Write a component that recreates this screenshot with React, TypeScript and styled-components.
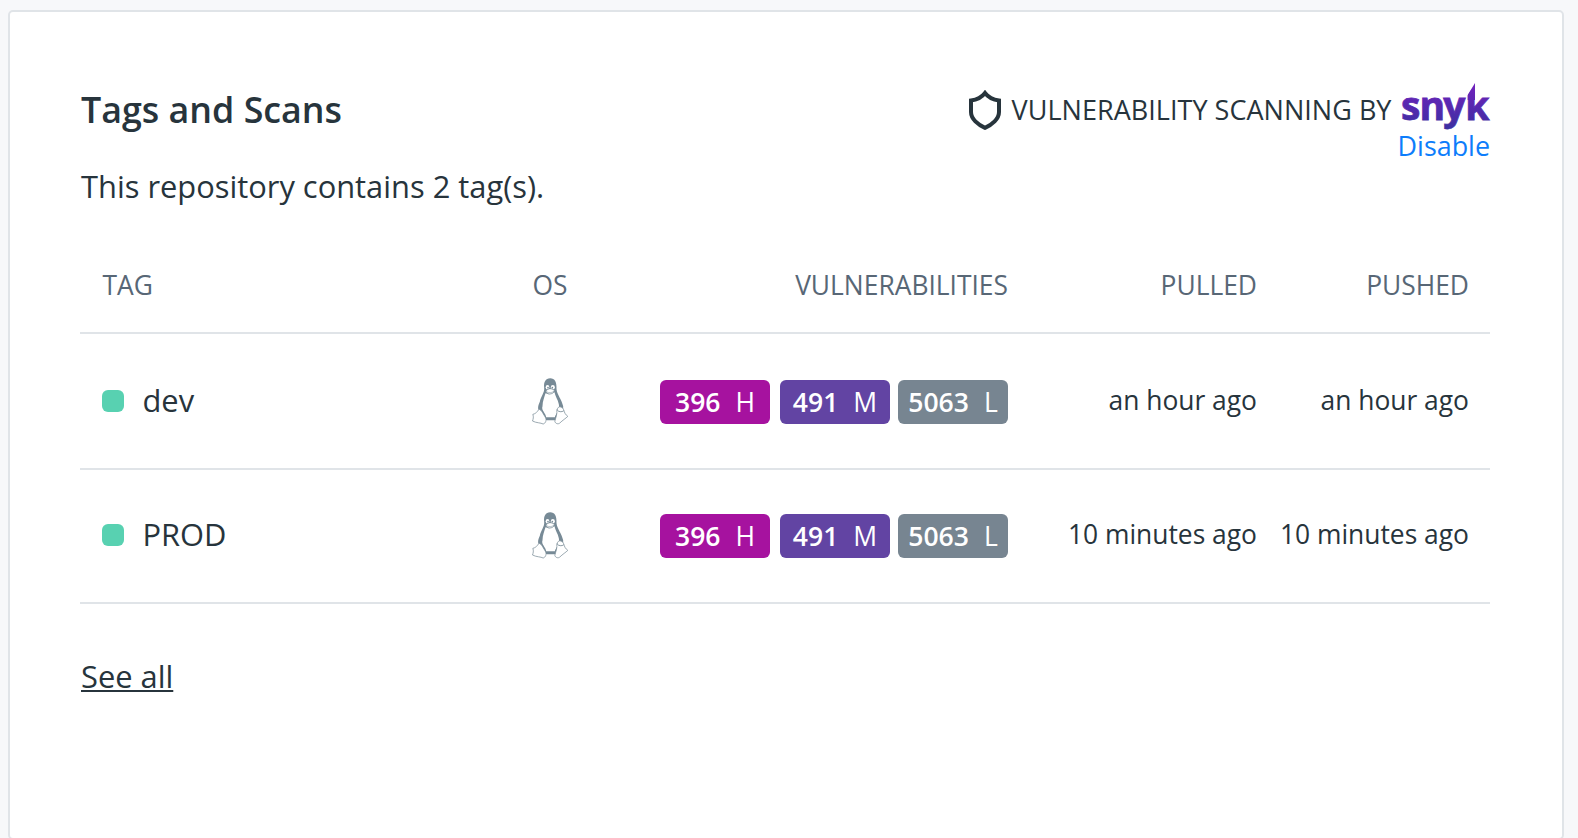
import React from "react";
import styled, { createGlobalStyle } from "styled-components";

const GlobalStyle = createGlobalStyle`
  *, *::before, *::after { box-sizing: border-box; }
  html, body { margin: 0; padding: 0; }
  body {
    height: 838px;
    overflow: hidden;
    background: #f7f8fa;
    color: #27343c;
    font-family: "Open Sans", sans-serif;
  }
`;

const Page = styled.main`
  padding: 10px 14px 0 8px;
`;

const Card = styled.section`
  height: 830px;
  padding: 73px 72px 0 70px;
  background: #fff;
  border: 2px solid #e0e4e8;
  border-radius: 5px;
`;

const CardHeader = styled.header`
  display: flex;
  justify-content: space-between;
  align-items: flex-start;
  height: 80px;
  padding-left: 1px;
`;

const Title = styled.h2`
  margin: 0;
  font-size: 35.8px;
  line-height: 48px;
  font-weight: 600;
`;

const Scanning = styled.div`
  display: flex;
  flex-direction: column;
  align-items: flex-end;
  padding-top: 5px;
`;

const ScanningLine = styled.div`
  display: flex;
  align-items: flex-start;
  height: 37px;
  font-size: 27px;
  line-height: 39px;
  letter-spacing: 0.03px;
  white-space: nowrap;
`;

const ShieldIcon = styled.svg`
  width: 32px;
  height: 40px;
  margin-right: 11px;
`;

const SnykLogo = styled.svg`
  width: 90px;
  height: 60px;
  margin: -12px 0 0 8.5px;
  overflow: visible;
`;

const DisableLink = styled.a`
  color: #0d7dfb;
  font-size: 26.9px;
  line-height: 37px;
`;

const Summary = styled.p`
  margin: 0;
  padding-left: 1px;
  font-size: 30.85px;
  line-height: 42px;
`;

const Table = styled.div`
  margin-top: 59px;
`;

const columns = `
  display: grid;
  grid-template-columns: 430px 36px 440px 249px 212px;
  padding-left: 22px;
  border-bottom: 2px solid #e0e4e8;
`;

const HeadRow = styled.div`
  ${columns}
  height: 68px;
  color: #586776;
  font-size: 26.4px;
  line-height: 38px;
`;

const Row = styled.div<{ $first?: boolean }>`
  ${columns}
  align-items: center;
  height: ${(p) => (p.$first ? 136 : 134)}px;
  padding-bottom: ${(p) => (p.$first ? 0 : 2)}px;
`;

const HeadCell = styled.div<{ $right?: boolean }>`
  padding-left: 0.5px;
  text-align: ${(p) => (p.$right ? "right" : "left")};
`;

const TagCell = styled.div`
  display: flex;
  align-items: center;
`;

const Status = styled.span`
  width: 22px;
  height: 22px;
  margin-right: 18.5px;
  border-radius: 6px;
  background: #58d1b1;
`;

const TagName = styled.span`
  padding-bottom: 2px;
  font-size: 30.85px;
  line-height: 42px;
`;

const OsCell = styled.div`
  display: flex;
  justify-content: center;
`;

const TuxIcon = styled.svg`
  flex: none;
  width: 44px;
  height: 54px;
`;

const Badges = styled.div`
  display: flex;
  justify-content: flex-end;
  padding-top: 2px;
`;

const Badge = styled.span<{ $color: string }>`
  display: flex;
  justify-content: center;
  gap: 15px;
  width: 110px;
  height: 44px;
  border-radius: 6px;
  background: ${(p) => p.$color};
  color: #fff;
  font-size: 26.5px;
  line-height: 45px;

  & + & { margin-left: 10px; }
  & + & + & { margin-left: 8px; }
`;

const Count = styled.span`
  font-weight: 600;
`;

const Time = styled.div`
  padding-bottom: 2px;
  font-size: 26.4px;
  line-height: 36px;
  text-align: right;
  white-space: nowrap;
`;

const SeeAll = styled.a`
  display: inline-block;
  margin: 51px 0 0 1px;
  font-size: 30.85px;
  line-height: 42px;
  text-decoration: underline;
  text-decoration-thickness: 2px;
  text-underline-offset: 2px;
  text-decoration-skip-ink: none;
`;

const Shield = () => (
  <ShieldIcon viewBox="0 0 32 40" fill="none" stroke="#27343c" strokeWidth="4">
    <path d="M16 3C13 7 8 9.8 2 10.5V22C2 29 9 34.8 16 37.8C23 34.8 30 29 30 22V10.5C24 9.8 19 7 16 3Z" />
  </ShieldIcon>
);

const Snyk = () => (
  <SnykLogo viewBox="0 -4 90 60">
    <defs>
      <linearGradient id="snyk" gradientUnits="userSpaceOnUse" x1="0" y1="0" x2="0" y2="48">
        <stop offset="0" stopColor="#7421be" />
        <stop offset="1" stopColor="#3a30a0" />
      </linearGradient>
    </defs>
    <text
      x="1 19.6 43.2 65.2"
      y="37.5"
      fill="url(#snyk)"
      stroke="url(#snyk)"
      strokeWidth="0.8"
      letterSpacing="0"
      fontFamily="Open Sans"
      fontWeight="700"
      fontSize="39"
    >
      snyk
    </text>
    <path fill="#fff" d="M66 5H73L67.4 13.8H66Z" />
    <path fill="url(#snyk)" d="M67.7 13L75 1V18H67.7Z" />
  </SnykLogo>
);

const Tux = () => (
  <TuxIcon viewBox="-0.5 -1 132 162" fill="#fff" stroke="#778a96" strokeWidth="2.2">
    <path
      fill="#778a96"
      stroke="none"
      d="M66 12C52 12 46 24 48 40C50 54 38 66 35 82C28 96 29 104 33 112C38 128 46 138 62 138H84C98 126 106 112 105 96C101 76 86 60 85 44C86 24 80 12 66 12Z"
    />
    <path
      stroke="none"
      d="M52 57C49 68 43 80 43 96C38 108 54 118 54 129H80C82 119 96 109 92 90C89 75 81 66 79 54C70 60 60 61 52 57Z"
    />
    <ellipse cx="58" cy="39" rx="5.5" ry="7" stroke="none" />
    <ellipse cx="74" cy="39" rx="6" ry="7" stroke="none" />
    <circle cx="59.5" cy="40" r="2.5" fill="#778a96" stroke="none" />
    <circle cx="72.5" cy="40" r="2.5" fill="#778a96" stroke="none" />
    <path d="M53 50C58 45 62 43 66 43C71 43 76 46 79 49C77 55 71 59 65 59C59 59 54 55 53 50Z" />
    <path d="M55 52C62 56 70 56 77 51" fill="none" strokeWidth="1.5" />
    <path d="M33 105C29 107 27 117 14 120C17 128 15 134 13 140C24 146 38 145 45 149C52 147 56 138 52 130C46 120 40 107 33 105Z" />
    <path d="M86 106C88 118 82 132 80 141C82 149 91 150 95 146C103 138 113 132 119 126C111 121 109 114 107 108C101 114 92 112 86 106Z" />
    <path d="M87 107C88 99 93 96 98 98C103 99 106 103 107 109C101 114 92 113 87 107Z" />
  </TuxIcon>
);

const tags = [
  { name: "dev", time: "an hour ago" },
  { name: "PROD", time: "10 minutes ago" },
];

const severities = [
  { count: 396, level: "H", color: "#a6129f" },
  { count: 491, level: "M", color: "#6244a3" },
  { count: 5063, level: "L", color: "#778591" },
];

export default function App() {
  return (
    <>
      <GlobalStyle />
      <Page>
        <Card>
          <CardHeader>
            <Title>Tags and Scans</Title>
            <Scanning>
              <ScanningLine>
                <Shield />
                VULNERABILITY SCANNING BY
                <Snyk />
              </ScanningLine>
              <DisableLink>Disable</DisableLink>
            </Scanning>
          </CardHeader>
          <Summary>This repository contains 2 tag(s).</Summary>
          <Table>
            <HeadRow>
              <HeadCell>TAG</HeadCell>
              <HeadCell>OS</HeadCell>
              <HeadCell $right>VULNERABILITIES</HeadCell>
              <HeadCell $right>PULLED</HeadCell>
              <HeadCell $right>PUSHED</HeadCell>
            </HeadRow>
            {tags.map((tag, i) => (
              <Row key={tag.name} $first={i === 0}>
                <TagCell>
                  <Status />
                  <TagName>{tag.name}</TagName>
                </TagCell>
                <OsCell>
                  <Tux />
                </OsCell>
                <Badges>
                  {severities.map((s) => (
                    <Badge key={s.level} $color={s.color}>
                      <Count>{s.count}</Count>
                      <span>{s.level}</span>
                    </Badge>
                  ))}
                </Badges>
                <Time>{tag.time}</Time>
                <Time>{tag.time}</Time>
              </Row>
            ))}
          </Table>
          <SeeAll>See all</SeeAll>
        </Card>
      </Page>
    </>
  );
}
